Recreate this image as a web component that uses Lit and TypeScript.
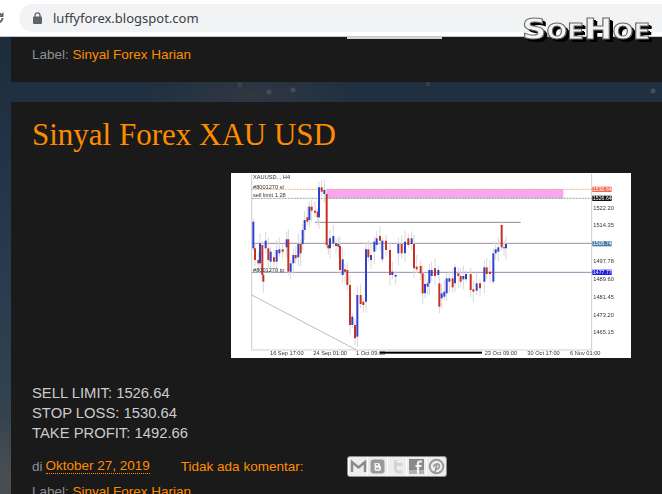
import { LitElement, css, html, svg } from "lit";
import { customElement } from "lit/decorators.js";

// x, body top, body bottom, up?  (coords are 3x the image, see viewBox)
const candles: [number, number, number, number][] = [
  [70, 155, 235, 1], [75, 235, 270, 0], [85, 270, 280, 0], [90, 220, 280, 1], [97, 225, 315, 0],
  [100, 315, 335, 0], [107, 212, 235, 1], [115, 235, 270, 0], [122, 245, 275, 1], [132, 262, 275, 0],
  [140, 240, 275, 1], [148, 238, 250, 1], [158, 238, 245, 0], [170, 208, 232, 1], [175, 208, 305, 0],
  [182, 280, 305, 1], [190, 255, 280, 1], [197, 255, 265, 0], [205, 222, 262, 1], [212, 222, 250, 0],
  [218, 180, 222, 1], [224, 150, 180, 1], [232, 142, 155, 0], [238, 110, 150, 1], [245, 110, 122, 0],
  [255, 122, 128, 0], [263, 125, 142, 0], [267, 52, 142, 1], [275, 52, 65, 0], [283, 60, 72, 1],
  [290, 72, 225, 0], [295, 225, 235, 0], [300, 205, 235, 1], [310, 198, 220, 1], [318, 220, 228, 0],
  [325, 222, 230, 1], [330, 228, 300, 0], [338, 268, 315, 1], [345, 298, 305, 0], [352, 300, 345, 0],
  [360, 345, 465, 0], [367, 440, 465, 1], [375, 465, 505, 0], [382, 375, 500, 1], [392, 375, 402, 0],
  [400, 395, 405, 0], [408, 238, 395, 1], [415, 238, 262, 0], [423, 255, 270, 1], [433, 215, 245, 1],
  [440, 205, 225, 1], [450, 198, 212, 0], [457, 212, 268, 1], [468, 212, 240, 0], [480, 240, 315, 0],
  [487, 305, 315, 1], [497, 315, 320, 1], [505, 222, 250, 1], [515, 222, 250, 0], [525, 215, 250, 1],
  [535, 205, 225, 0], [545, 205, 222, 1], [552, 222, 295, 0], [560, 290, 298, 0], [572, 288, 310, 0],
  [578, 310, 370, 0], [585, 342, 370, 1], [593, 340, 350, 1], [598, 300, 340, 1], [605, 300, 318, 1],
  [615, 295, 318, 0], [625, 300, 315, 1], [628, 340, 410, 0], [635, 370, 385, 1], [643, 365, 380, 1],
  [650, 325, 370, 1], [658, 325, 335, 1], [668, 325, 352, 0], [675, 292, 340, 1], [685, 310, 318, 0],
  [692, 318, 335, 0], [700, 318, 328, 1], [708, 312, 328, 1], [722, 312, 360, 0], [730, 358, 365, 0],
  [740, 340, 362, 1], [750, 340, 355, 0], [763, 292, 335, 1], [770, 292, 312, 0], [780, 305, 312, 0],
  [790, 250, 335, 1], [797, 238, 250, 1], [805, 232, 245, 1], [815, 165, 232, 0], [822, 232, 235, 0],
  [828, 222, 235, 1],
];

const priceTicks: [string, number][] = [
  ["1522.20", 114], ["1514.35", 167], ["1497.78", 274], ["1489.60", 328],
  ["1481.45", 381], ["1473.20", 435], ["1465.15", 488],
];

const priceTags: [string, number, string, string][] = [
  ["1530.64", 58, "#f0674e", "#fff"],
  ["1526.64", 85, "#111", "#fff"],
  ["1505.74", 221, "#4f7ca8", "#fff"],
  ["1477.77", 307, "#1a1ae0", "#fff"],
];

const timeTicks: [string, number][] = [
  ["16 Sep 17:00", 120], ["24 Sep 01:00", 250], ["1 Oct 09:00", 378],
  ["23 Oct 09:00", 764], ["30 Oct 17:00", 892], ["6 Nov 01:00", 1020],
];

@customElement("forex-chart")
export class ForexChart extends LitElement {
  static styles = css`
    :host {
      display: block;
      width: 400px;
      height: 185px;
      background: #fff;
    }
    svg {
      display: block;
      filter: blur(0.55px);
    }
    text {
      font-family: "Liberation Sans", sans-serif;
      font-size: 17px;
      fill: #333;
    }
    .tag {
      font-size: 15.5px;
    }
  `;

  render() {
    return html`
      <svg width="400" height="185" viewBox="3 9 1200 555">
        <rect x="290" y="58" width="710" height="27" fill="#f9a6ee"></rect>
        <path d="M65 12V540H1085V12" fill="none" stroke="#cfcfcf" stroke-width="3"></path>
        <path d="M65 58H1085" stroke="#e8835f" stroke-width="2" stroke-dasharray="6 3"></path>
        <path d="M65 85H1085" stroke="#4d8a55" stroke-width="2" stroke-dasharray="6 3"></path>
        <path d="M255 157H872" stroke="#8b8b8b" stroke-width="3"></path>
        <path d="M65 220H1085" stroke="#a48f98" stroke-width="3"></path>
        <path d="M65 307H1085" stroke="#8f8fae" stroke-width="3"></path>
        <path d="M65 375L380 540" stroke="#9a9a9a" stroke-width="2"></path>
        ${candles.map(([x, top, bottom], i) => svg`
          <path d="M${x} ${top - 10 - (i * 7) % 26}V${bottom + 8 + (i * 11) % 30}"
            stroke="#d9d9d9" stroke-width="3"></path>`)}
        ${candles.map(([x, top, bottom, up]) => svg`
          <path d="M${x} ${top}V${bottom}" stroke=${up ? "#3240cc" : "#c9301f"} stroke-width="6"></path>`)}
        <text x="69" y="27">XAUUSD.., H4</text>
        <text x="69" y="56">#8001270 sl</text>
        <text x="69" y="82">sell limit 1.28</text>
        <text x="69" y="305">#8001270 tp</text>
        ${priceTicks.map(([label, y]) => svg`<text x="1090" y=${y + 5}>${label}</text>`)}
        ${priceTags.map(([label, y, bg, fg]) => svg`
          <rect x="1087" y=${y - 8} width="58" height="16" fill=${bg}></rect>
          <text class="tag" x="1089" y=${y + 5} style="fill:${fg}">${label}</text>`)}
        ${timeTicks.map(([label, x]) => svg`<text x=${x} y="556">${label}</text>`)}
        <rect x="450" y="545" width="306" height="6" fill="#000"></rect>
      </svg>
    `;
  }
}

@customElement("app-root")
export class AppRoot extends LitElement {
  static styles = css`
    :host {
      display: block;
      position: relative;
      width: 662px;
      height: 494px;
      overflow: hidden;
      font-family: "Liberation Sans", Arial, sans-serif;
      font-size: 13.5px;
      color: #ccc;
      background:
        radial-gradient(circle at 240px 85px, #3a434c 0 2px, transparent 3px),
        radial-gradient(circle at 269px 92px, #444d55 0 2px, transparent 3px),
        radial-gradient(circle at 293px 90px, #444d55 0 2px, transparent 3px),
        radial-gradient(circle at 428px 84px, #343e48 0 2px, transparent 3px),
        radial-gradient(circle at 653px 91px, #444d55 0 2px, transparent 3px),
        radial-gradient(ellipse 60px 70px at 0 480px, #4a4f53, transparent),
        radial-gradient(ellipse 110px 30px at 250px 95px, #303841, transparent),
        linear-gradient(180deg, #1c2a38 0, #24364a 40%, #2f4150 75%, #3a434b 100%);
    }

    .toolbar {
      height: 36px;
      background: #fff;
      border-bottom: 1px solid #c8c8c8;
      display: flex;
      align-items: center;
      gap: 14px;
    }
    .reload {
      width: 5px;
      height: 14px;
      flex: none;
      overflow: hidden;
    }
    .omnibox {
      flex: 1;
      height: 28px;
      border-radius: 14px 0 0 14px;
      background: #f1f3f4;
      display: flex;
      align-items: center;
      gap: 11px;
      padding-left: 14px;
      font-family: "Noto Sans", sans-serif;
      font-size: 13px;
      color: #3c4043;
    }

    .page {
      margin-left: 11px;
      width: 840px;
    }
    .post {
      background: #1a1a1a;
      padding-left: 21px;
    }
    .post + .post {
      margin-top: 20px;
      padding-top: 14px;
    }
    .prev {
      height: 45px;
    }
    .prev-buttons {
      width: 95px;
      height: 2px;
      margin-left: 315px;
      background: #d4d4d4;
    }
    .label {
      margin-top: 6px;
      line-height: 20px;
      color: #8a9096;
    }
    a {
      color: #ff8c00;
      text-decoration: none;
    }
    h1 {
      margin: 0;
      font-family: "Liberation Serif", serif;
      font-size: 31px;
      line-height: 38px;
      font-weight: 400;
      color: #ff8c00;
    }
    .figure {
      display: flex;
      justify-content: center;
      width: 798px;
      margin-top: 19px;
    }
    .body {
      margin-top: 25px;
      font-size: 14.8px;
      line-height: 20px;
    }
    .footer {
      display: flex;
      align-items: center;
      height: 20px;
      margin-top: 13px;
      color: #8a9096;
    }
    .date {
      margin-left: 3px;
      border-bottom: 1px dotted #ff8c00;
      line-height: 14px;
    }
    .comments {
      margin-left: 31px;
    }
    .share {
      display: flex;
      margin-left: 44px;
      border: 1px solid #8c8c8c;
      border-radius: 3px;
      background: #ededed;
      overflow: hidden;
    }
    .share svg {
      display: block;
      width: 19px;
      height: 19px;
      border-left: 1px solid #fff;
      margin-left: -0.5px;
    }
    .footer + .label {
      margin-top: 6px;
    }

    .watermark {
      position: absolute;
      left: 522px;
      top: 13px;
      display: flex;
      align-items: baseline;
      font-family: "DejaVu Sans", sans-serif;
      font-weight: 700;
      font-size: 29px;
      line-height: 32px;
      color: #f4f4f4;
      -webkit-text-stroke: 1px #6a6a6a;
      text-shadow: 2px 2px 0 #000, 3px 3px 0 #000;
      transform: scaleX(1.17);
      transform-origin: left center;
    }
    .watermark span {
      font-size: 21px;
    }
  `;

  render() {
    return html`
      <div class="toolbar">
        <div class="reload">
          <svg width="14" height="14" viewBox="0 0 14 14" style="margin-left:-9px">
            <path d="M11.5 7a4.5 4.5 0 1 1-1.4-3.3" fill="none" stroke="#5f6368" stroke-width="2"></path>
            <path d="M12.5 1v5h-5z" fill="#5f6368"></path>
          </svg>
        </div>
        <div class="omnibox">
          <svg width="9" height="12" viewBox="0 0 9 12">
            <path d="M2 5V3.3a2.5 2.5 0 0 1 5 0V5" fill="none" stroke="#5f6368" stroke-width="1.3"></path>
            <rect y="4.6" width="9" height="7.4" rx="1" fill="#5f6368"></rect>
          </svg>
          <span>luffyforex.blogspot.com</span>
        </div>
      </div>

      <div class="page">
        <section class="post prev">
          <div class="prev-buttons"></div>
          <div class="label">Label: <a href="#">Sinyal Forex Harian</a></div>
        </section>

        <section class="post">
          <h1><a href="#">Sinyal Forex XAU USD</a></h1>
          <div class="figure"><forex-chart></forex-chart></div>
          <div class="body">
            SELL LIMIT: 1526.64<br />
            STOP LOSS: 1530.64<br />
            TAKE PROFIT: 1492.66
          </div>
          <div class="footer">
            di <a class="date" href="#">Oktober 27, 2019</a>
            <a class="comments" href="#">Tidak ada komentar:</a>
            <div class="share">
              <svg viewBox="0 0 19 19">
                <path d="M3 15V5l6.5 5.5L16 5v10" fill="none" stroke="#8a8a8a" stroke-width="2.4"></path>
              </svg>
              <svg viewBox="0 0 19 19">
                <rect x="2.5" y="2.5" width="14" height="14" rx="3" fill="#9a9a9a"></rect>
                <path d="M6.5 6h4a1.5 1.5 0 0 1 1.5 1.5V9h1v3a2 2 0 0 1-2 2H8a1.5 1.5 0 0 1-1.5-1.5z" fill="#eee"></path>
                <path d="M8 7.6h2M8 11.6h3" stroke="#9a9a9a" stroke-width="1.2"></path>
              </svg>
              <svg viewBox="0 0 19 19">
                <path d="M7.5 3v9a3 3 0 0 0 3 3h4M7.5 7.5h7" fill="none" stroke="#d4d4d4" stroke-width="3"></path>
              </svg>
              <svg viewBox="0 0 19 19">
                <rect x="2" y="2" width="15" height="15" fill="#8a8a8a"></rect>
                <rect x="2" y="13" width="15" height="4" fill="#b0b0b0"></rect>
                <path d="M11 17V6.5a2 2 0 0 1 2-2h2M8.5 9h6" fill="none" stroke="#f2f2f2" stroke-width="2.2"></path>
              </svg>
              <svg viewBox="0 0 19 19">
                <circle cx="9.5" cy="9.5" r="6.8" fill="none" stroke="#9a9a9a" stroke-width="2"></circle>
                <path d="M8 15l2-8M7 10c-1-3 5.500-4.500 5.500-1 0 3.500-3.500 3.500-3.500 2" fill="none" stroke="#9a9a9a" stroke-width="1.7"></path>
              </svg>
            </div>
          </div>
          <div class="label">Label: <a href="#">Sinyal Forex Harian</a></div>
        </section>
      </div>

      <div class="watermark">S<span>OE</span>H<span>OE</span></div>
    `;
  }
}
